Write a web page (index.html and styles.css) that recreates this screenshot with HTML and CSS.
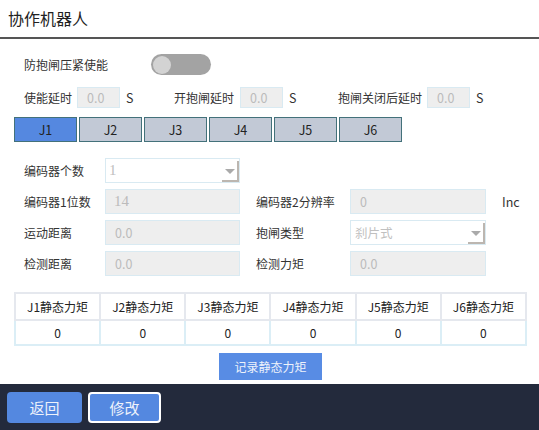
FILE: index.html
```html
<!DOCTYPE html>
<html lang="zh">
<head>
<meta charset="utf-8">
<title>协作机器人</title>
<link rel="stylesheet" href="styles.css">
</head>
<body>
<div class="page">
  <div class="header">协作机器人</div>
  <div class="content">
    <div class="row toggle-row">
      <span class="toggle-label">防抱闸压紧使能</span>
      <span class="switch"><span class="knob"></span></span>
    </div>
    <div class="row delay-row">
      <div class="dgroup g1">
        <span class="dlabel l1">使能延时</span>
        <span class="field dinput">0.0</span>
        <span class="unit">S</span>
      </div>
      <div class="dgroup g2">
        <span class="dlabel l2">开抱闸延时</span>
        <span class="field dinput">0.0</span>
        <span class="unit">S</span>
      </div>
      <div class="dgroup g3">
        <span class="dlabel l3">抱闸关闭后延时</span>
        <span class="field dinput">0.0</span>
        <span class="unit">S</span>
      </div>
    </div>
    <div class="tabs">
      <span class="tab active">J1</span>
      <span class="tab">J2</span>
      <span class="tab">J3</span>
      <span class="tab">J4</span>
      <span class="tab">J5</span>
      <span class="tab">J6</span>
    </div>
    <div class="form">
      <span class="flabel">编码器个数</span>
      <span class="select wl"><span class="select-text serif">1</span><span class="arrow"><span class="tri"></span></span></span>
      <span class="cell-empty"></span>
      <span class="cell-empty"></span>
      <span class="cell-empty"></span>

      <span class="flabel">编码器1位数</span>
      <span class="field wl serif">14</span>
      <span class="flabel">编码器2分辨率</span>
      <span class="field wr">0</span>
      <span class="flabel unit-inc">Inc</span>

      <span class="flabel">运动距离</span>
      <span class="field wl">0.0</span>
      <span class="flabel">抱闸类型</span>
      <span class="select wr"><span class="select-text">刹片式</span><span class="arrow"><span class="tri"></span></span></span>
      <span class="cell-empty"></span>

      <span class="flabel">检测距离</span>
      <span class="field wl">0.0</span>
      <span class="flabel">检测力矩</span>
      <span class="field wr">0.0</span>
      <span class="cell-empty"></span>
    </div>
    <table class="torque">
      <tr class="thead">
        <td>J1静态力矩</td><td>J2静态力矩</td><td>J3静态力矩</td><td>J4静态力矩</td><td>J5静态力矩</td><td>J6静态力矩</td>
      </tr>
      <tr class="tbody">
        <td>0</td><td>0</td><td>0</td><td>0</td><td>0</td><td>0</td>
      </tr>
    </table>
    <div class="action">
      <span class="record-btn">记录静态力矩</span>
    </div>
  </div>
  <div class="footer">
    <span class="fbtn">返回</span>
    <span class="fbtn outlined">修改</span>
  </div>
</div>
</body>
</html>
```

FILE: styles.css
```css
* { box-sizing: border-box; }
html, body {
  margin: 0;
  padding: 0;
  background: #ffffff;
}
body {
  font-family: "Noto Sans CJK SC", "Noto Sans", sans-serif;
  color: #333333;
  font-size: 12px;
}
.page {
  width: 539px;
  height: 430px;
  display: flex;
  flex-direction: column;
  overflow: hidden;
}
.header {
  height: 39px;
  line-height: 37px;
  padding-left: 8px;
  font-size: 16px;
  color: #222;
  border-bottom: 2px solid #555555;
  flex: none;
}
.content {
  flex: 1;
  padding: 0 12px 0 14px;
}
.row {
  display: flex;
  align-items: center;
  padding-left: 10px;
}
.toggle-row {
  margin-top: 15px;
  height: 21px;
}
.toggle-label {
  width: 127px;
}
.switch {
  width: 60px;
  height: 21px;
  border-radius: 11px;
  background: #a3a3a3;
  display: flex;
  align-items: center;
  padding-left: 2px;
}
.knob {
  width: 18px;
  height: 18px;
  border-radius: 50%;
  background: #d3d3d3;
}
.delay-row {
  margin-top: 12px;
  height: 21px;
}
.dgroup {
  display: flex;
  align-items: center;
  height: 21px;
}
.g1 { width: 150px; }
.g2 { width: 164px; }
.l1 { width: 53px; }
.l2 { width: 66px; }
.l3 { width: 89px; }
.field {
  display: flex;
  align-items: center;
  background: #eeeeee;
  border: 1px solid #d9eaf2;
  color: #bbbbbb;
  padding-left: 9px;
  font-size: 12.5px;
}
.dinput {
  width: 43px;
  height: 21px;
}
.unit {
  margin-left: 6px;
  color: #333;
  font-size: 12.5px;
}
.tabs {
  display: flex;
  gap: 2px;
  margin-top: 9px;
}
.tab {
  width: 63px;
  height: 25px;
  display: flex;
  align-items: center;
  justify-content: center;
  background: #c2c9d6;
  border: 1.5px solid #43717a;
  color: #222;
  font-size: 12.5px;
}
.tab.active {
  background: #5588e0;
}
.form {
  display: grid;
  grid-template-columns: 81px 151px 94px 152px auto;
  grid-auto-rows: 25px;
  row-gap: 6px;
  margin-top: 16px;
  padding-left: 10px;
}
.flabel {
  display: flex;
  align-items: center;
  color: #333;
}
.unit-inc {
  color: #333;
  font-size: 12.5px;
}
.wl { width: 135px; }
.wr { width: 136px; }
.serif {
  font-family: "Liberation Serif", "DejaVu Serif", serif;
}
.field.serif { font-size: 15px; padding-left: 8px; }
.select {
  display: flex;
  align-items: stretch;
  background: #ffffff;
  border: 1px solid #d9eaf2;
  color: #c0c0c0;
}
.select-text {
  flex: 1;
  display: flex;
  align-items: center;
  padding-left: 4px;
  font-size: 12.5px;
}
.select-text.serif { font-size: 15px; padding-left: 3px; }
.arrow {
  width: 17px;
  margin: 2px 0 0 0;
  border-right: 2px solid #bcb6b0;
  border-bottom: 2px solid #bcb6b0;
  display: flex;
  align-items: center;
  justify-content: center;
}
.tri {
  width: 0;
  height: 0;
  border-left: 5px solid transparent;
  border-right: 5px solid transparent;
  border-top: 5px solid #aaaaaa;
  margin-top: 2px;
}
.torque {
  margin-top: 16px;
  width: 513px;
  border-collapse: collapse;
  table-layout: fixed;
}
.torque td {
  text-align: center;
  padding: 0;
  color: #222;
  font-size: 12px;
}
.thead td {
  height: 27px;
  border: 2px solid #e5e8ee;
}
.tbody td {
  height: 25px;
  border: 2px solid #dbeef6;
}
.action {
  display: flex;
  justify-content: center;
  margin-top: 7px;
}
.record-btn {
  width: 103px;
  height: 27px;
  display: flex;
  align-items: center;
  justify-content: center;
  background: #588ce4;
  color: #eef2fb;
  font-size: 12px;
}
.footer {
  flex: none;
  height: 46px;
  background: #232a3c;
  display: flex;
  align-items: center;
  padding-left: 7px;
  gap: 6px;
}
.fbtn {
  width: 75px;
  height: 31px;
  border-radius: 4px;
  background: #5488e0;
  color: #eef2fb;
  font-size: 15px;
  display: flex;
  align-items: center;
  justify-content: center;
}
.fbtn.outlined {
  width: 73px;
  border: 2px solid #ffffff;
}
```
